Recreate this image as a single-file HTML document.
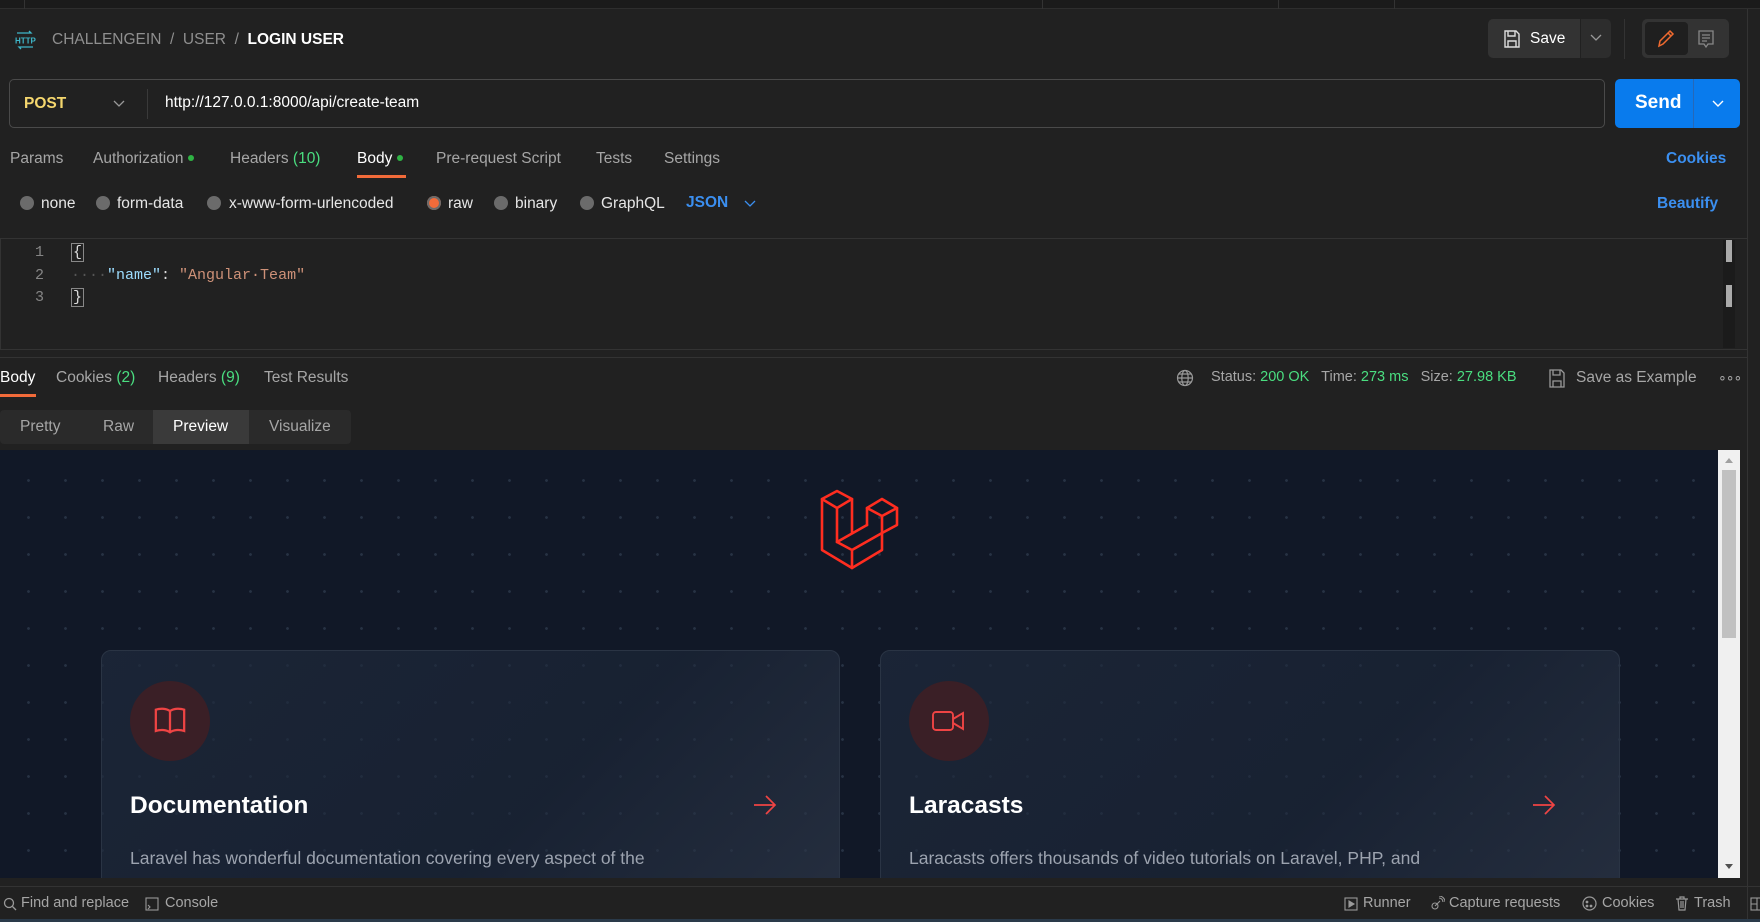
<!DOCTYPE html>
<html><head><meta charset="utf-8"><style>
*{box-sizing:border-box;margin:0;padding:0}
body{width:1760px;height:922px;background:#212121;font-family:"Liberation Sans",sans-serif;color:#a6a6a6;position:relative;overflow:hidden;font-size:15px}
.a{position:absolute;white-space:nowrap}
.w{color:#fff}
.g{color:#4ade80}
.b{color:#3b8ff0}
.dot{display:inline-block;width:6px;height:6px;border-radius:50%;background:#2fb344;margin-left:5px;vertical-align:middle;position:relative;top:-1px}
.rad{position:absolute;width:14px;height:14px;border-radius:50%;background:#6b6b6b}
.grid{background-color:#111827;background-image:radial-gradient(circle,#273244 1.2px,transparent 1.6px);background-size:37px 37px;background-position:10px 12px}
.card{position:absolute;top:650px;height:240px;border-radius:10px;border:1px solid #2a3444;background:linear-gradient(135deg,rgba(30,41,59,.75),rgba(30,41,59,.55) 60%,rgba(45,55,72,.7))}
.circ{position:absolute;left:28px;top:30px;width:80px;height:80px;border-radius:50%;background:#3a1f26}
.ct{position:absolute;left:28px;top:141px;font-size:24.5px;font-weight:bold;color:#fff}
.cd{position:absolute;left:28px;top:197px;font-size:17.5px;color:#9ca3af}
</style></head><body>
<div class="a" style="left:0;top:0;width:1760px;height:9px;background:#1b1b1b;border-bottom:1px solid #2e2e2e"></div>
<div class="a" style="left:24px;top:0;width:1px;height:9px;background:#333"></div>
<div class="a" style="left:1042px;top:0;width:1px;height:9px;background:#333"></div>
<div class="a" style="left:1278px;top:0;width:1px;height:9px;background:#333"></div>
<div class="a" style="left:1394px;top:0;width:1px;height:9px;background:#333"></div>
<div class="a" style="left:1747px;top:9px;width:1px;height:913px;background:#333"></div>
<svg class="a" style="left:13px;top:30px" width="24" height="20" viewBox="0 0 24 20"><g stroke="#3fb7c9" fill="none" stroke-width="1.3"><path d="M4 3h14l-2-2M20 17H6l2 2"/></g><text x="2" y="13.5" font-size="8" fill="#3fb7c9" font-family="Liberation Sans" font-weight="bold">HTTP</text></svg>
<div class="a" style="left:52px;top:31px;font-size:15.5px;color:#8f8f8f">CHALLENGEIN &nbsp;/&nbsp; USER &nbsp;/&nbsp; <span class="w" style="font-weight:bold">LOGIN USER</span></div>
<div class="a" style="left:1488px;top:19px;width:92px;height:39px;background:#333;border-radius:5px 0 0 5px"></div>
<svg class="a" style="left:1502px;top:29px" width="20" height="20" viewBox="0 0 20 20" fill="none" stroke="#ddd" stroke-width="1.4"><path d="M3 2h11l3 3v13H3z"/><path d="M6 2v5h7V2M6 18v-6h8v6"/></svg>
<div class="a w" style="left:1530px;top:30px;font-size:15.5px">Save</div>
<div class="a" style="left:1581px;top:19px;width:30px;height:39px;background:#2d2d2d;border-radius:0 5px 5px 0"></div>
<svg class="a" style="left:1590px;top:34px" width="12" height="8"><path d="M1 1l5 5 5-5" stroke="#999" fill="none" stroke-width="1.3"/></svg>
<div class="a" style="left:1624px;top:19px;width:1px;height:40px;background:#333"></div>
<div class="a" style="left:1642px;top:19px;width:87px;height:39px;background:#333;border-radius:5px"></div>
<div class="a" style="left:1645px;top:22px;width:43px;height:33px;background:#1f1f1f;border-radius:4px"></div>
<svg class="a" style="left:1656px;top:28px" width="20" height="20" viewBox="0 0 20 20" fill="none" stroke="#f06a2f" stroke-width="1.5"><path d="M3 18l1-5L14 3l3 3L7 16z"/><path d="M12 5l3 3"/></svg>
<svg class="a" style="left:1697px;top:29px" width="18" height="20" viewBox="0 0 18 20" fill="none" stroke="#888" stroke-width="1.3"><path d="M2 2h14v13H11l-2 3-2-3H2z"/><path d="M5 6h8M5 9h8M5 12h5"/></svg>
<div class="a" style="left:9px;top:79px;width:1596px;height:49px;border:1px solid #4a4a4a;border-radius:5px;background:#212121"></div>
<div class="a" style="left:24px;top:95px;font-size:15.5px;font-weight:bold;color:#f5d76e">POST</div>
<svg class="a" style="left:113px;top:100px" width="12" height="8"><path d="M1 1l5 5 5-5" stroke="#999" fill="none" stroke-width="1.3"/></svg>
<div class="a" style="left:147px;top:89px;width:1px;height:30px;background:#3a3a3a"></div>
<div class="a w" style="left:165px;top:94px;font-size:15.5px">http://127.0.0.1:8000/api/create-team</div>
<div class="a" style="left:1615px;top:79px;width:125px;height:49px;background:#097bed;border-radius:5px"></div>
<div class="a" style="left:1693px;top:79px;width:1px;height:49px;background:#2668b8"></div>
<div class="a w" style="left:1635px;top:92px;font-size:19px;font-weight:bold">Send</div>
<svg class="a" style="left:1712px;top:100px" width="12" height="8"><path d="M1 1l5 5 5-5" stroke="#fff" fill="none" stroke-width="1.4"/></svg>
<div class="a" style="left:10px;top:150px;font-size:15.5px">Params</div>
<div class="a" style="left:93px;top:150px;font-size:15.5px">Authorization<span class="dot"></span></div>
<div class="a" style="left:230px;top:150px;font-size:15.5px">Headers <span class="g">(10)</span></div>
<div class="a w" style="left:357px;top:150px;font-size:15.5px">Body<span class="dot"></span></div>
<div class="a" style="left:357px;top:175px;width:49px;height:3px;background:#f26b3a"></div>
<div class="a" style="left:436px;top:150px;font-size:15.5px">Pre-request Script</div>
<div class="a" style="left:596px;top:150px;font-size:15.5px">Tests</div>
<div class="a" style="left:664px;top:150px;font-size:15.5px">Settings</div>
<div class="a b" style="left:1666px;top:150px;font-size:15.5px;font-weight:bold">Cookies</div>
<div class="rad" style="left:20px;top:196px"></div><div class="a" style="left:41px;top:195px;font-size:15.5px;color:#e6e6e6">none</div>
<div class="rad" style="left:96px;top:196px"></div><div class="a" style="left:117px;top:195px;font-size:15.5px;color:#e6e6e6">form-data</div>
<div class="rad" style="left:207px;top:196px"></div><div class="a" style="left:229px;top:195px;font-size:15.5px;color:#e6e6e6">x-www-form-urlencoded</div>
<div class="rad" style="left:427px;top:196px;background:#f26b3a;box-shadow:0 0 0 2px #6b6b6b inset"></div><div class="a" style="left:448px;top:195px;font-size:15.5px;color:#e6e6e6">raw</div>
<div class="rad" style="left:494px;top:196px"></div><div class="a" style="left:515px;top:195px;font-size:15.5px;color:#e6e6e6">binary</div>
<div class="rad" style="left:580px;top:196px"></div><div class="a" style="left:601px;top:195px;font-size:15.5px;color:#e6e6e6">GraphQL</div>
<div class="a b" style="left:686px;top:194px;font-size:15.5px;font-weight:bold">JSON</div>
<svg class="a" style="left:744px;top:200px" width="12" height="8"><path d="M1 1l5 5 5-5" stroke="#3b8ff0" fill="none" stroke-width="1.3"/></svg>
<div class="a b" style="left:1657px;top:195px;font-size:15.5px;font-weight:bold">Beautify</div>
<div class="a" style="left:0;top:238px;width:1747px;height:112px;border-top:1px solid #333;border-bottom:1px solid #333;border-left:1px solid #333"></div>
<div class="a" style="left:1723px;top:240px;width:12px;height:108px;background:#1b1b1b"></div>
<div class="a" style="left:1726px;top:240px;width:6px;height:22px;background:#aaa"></div>
<div class="a" style="left:1726px;top:285px;width:6px;height:22px;background:#aaa"></div>
<div class="a" style="font-family:'Liberation Mono',monospace;font-size:15px;left:35px;top:242px;line-height:22.5px;color:#858585">1<br>2<br>3</div>
<div class="a" style="font-family:'Liberation Mono',monospace;font-size:15px;left:71px;top:242px;line-height:22.5px;color:#ddd"><span style="border:1px solid #888;padding:0 1px">{</span><br><span style="color:#555">····</span><span style="color:#9cdcfe">"name"</span>: <span style="color:#ce9178">"Angular·Team"</span><br><span style="border:1px solid #888;padding:0 1px">}</span></div>
<div class="a" style="left:0;top:357px;width:1747px;height:1px;background:#333"></div>
<div class="a w" style="left:0;top:369px;font-size:15.5px">Body</div>
<div class="a" style="left:0;top:394px;width:36px;height:3px;background:#f26b3a"></div>
<div class="a" style="left:56px;top:369px;font-size:15.5px">Cookies <span class="g">(2)</span></div>
<div class="a" style="left:158px;top:369px;font-size:15.5px">Headers <span class="g">(9)</span></div>
<div class="a" style="left:264px;top:369px;font-size:15.5px">Test Results</div>
<svg class="a" style="left:1176px;top:369px" width="18" height="18" viewBox="0 0 18 18" fill="none" stroke="#999" stroke-width="1.2"><circle cx="9" cy="9" r="7.5"/><ellipse cx="9" cy="9" rx="3.2" ry="7.5"/><path d="M1.5 9h15M3 5h12M3 13h12"/></svg>
<div class="a" style="left:1211px;top:369px;font-size:14.5px">Status: <span class="g">200 OK</span> &nbsp; Time: <span class="g">273 ms</span> &nbsp; Size: <span class="g">27.98 KB</span></div>
<svg class="a" style="left:1548px;top:369px" width="18" height="19" viewBox="0 0 18 19" fill="none" stroke="#999" stroke-width="1.3"><path d="M2 1h11l3 3v14H2z"/><path d="M5 1v5h7V1M5 18v-6h8v6"/></svg>
<div class="a" style="left:1576px;top:369px;font-size:15.5px">Save as Example</div>
<div class="a" style="left:1718px;top:369px;font-size:14px;letter-spacing:-1px">∘∘∘</div>
<div class="a" style="left:0;top:410px;width:351px;height:34px;background:#2a2a2a;border-radius:4px"></div>
<div class="a" style="left:153px;top:410px;width:96px;height:34px;background:#3a3a3a"></div>
<div class="a" style="left:20px;top:418px;font-size:15.5px">Pretty</div>
<div class="a" style="left:103px;top:418px;font-size:15.5px">Raw</div>
<div class="a w" style="left:173px;top:418px;font-size:15.5px">Preview</div>
<div class="a" style="left:269px;top:418px;font-size:15.5px">Visualize</div>
<div class="a grid" style="left:0;top:450px;width:1718px;height:428px;overflow:hidden">
<svg class="a" style="left:800px;top:30px" width="110" height="100" viewBox="0 0 110 100" fill="none" stroke="#ff2d20" stroke-width="2.6" stroke-linejoin="round" stroke-linecap="round"><path d="M22 19L37 11L52 19L37 28Z"/><path d="M22 19V70L52 88L82 70V53"/><path d="M37 28V62L67 45M52 19V53"/><path d="M67 28L82 19L97 28L82 36Z"/><path d="M67 28V45M97 28V45L82 53L52 70L37 62M82 36V53M52 70V88"/></svg>
<div class="card" style="left:101px;width:739px;top:200px">
<div class="circ"></div>
<svg class="a" style="left:51px;top:54px" width="34" height="32" viewBox="0 0 24 22" fill="none" stroke="#ef4444" stroke-width="1.6"><path d="M12 4C9 2 5 2 2 3v15c3-1 7-1 10 1 3-2 7-2 10-1V3c-3-1-7-1-10 1zM12 4v15"/></svg>
<div class="ct">Documentation</div>
<svg class="a" style="left:651px;top:143px" width="24" height="22" viewBox="0 0 24 22" fill="none" stroke="#ef4444" stroke-width="1.7"><path d="M1 11h21M13 2l9 9-9 9"/></svg>
<div class="cd">Laravel has wonderful documentation covering every aspect of the</div>
</div>
<div class="card" style="left:880px;width:740px;top:200px">
<div class="circ"></div>
<svg class="a" style="left:50px;top:58px" width="36" height="24" viewBox="0 0 36 24" fill="none" stroke="#ef4444" stroke-width="1.9"><rect x="2" y="3" width="20" height="18" rx="3"/><path d="M22 10l10-6v16l-10-6"/></svg>
<div class="ct">Laracasts</div>
<svg class="a" style="left:651px;top:143px" width="24" height="22" viewBox="0 0 24 22" fill="none" stroke="#ef4444" stroke-width="1.7"><path d="M1 11h21M13 2l9 9-9 9"/></svg>
<div class="cd">Laracasts offers thousands of video tutorials on Laravel, PHP, and</div>
</div>
</div>
<div class="a" style="left:1718px;top:450px;width:22px;height:428px;background:#f0f0f0"></div>
<div class="a" style="left:1722px;top:470px;width:14px;height:168px;background:#c1c1c1"></div>
<svg class="a" style="left:1723px;top:456px" width="12" height="8"><path d="M2 7l4-5 4 5z" fill="#a0a0a0"/></svg>
<svg class="a" style="left:1723px;top:863px" width="12" height="8"><path d="M2 1l4 5 4-5z" fill="#505050"/></svg>
<div class="a" style="left:0;top:886px;width:1760px;height:1px;background:#333"></div>
<div class="a" style="left:0;top:919px;width:1760px;height:3px;background:#2a3a4a"></div>
<svg class="a" style="left:3px;top:897px" width="14" height="14" fill="none" stroke="#999" stroke-width="1.3"><circle cx="6" cy="6" r="4.5"/><path d="M9.5 9.5l3.5 3.5"/></svg>
<div class="a" style="left:21px;top:895px;font-size:14.5px">Find and replace</div>
<svg class="a" style="left:145px;top:897px" width="14" height="14" fill="none" stroke="#999" stroke-width="1.1"><rect x="1" y="1" width="12" height="12"/><path d="M3 8l2 2-2 2"/></svg>
<div class="a" style="left:165px;top:895px;font-size:14.5px">Console</div>
<svg class="a" style="left:1344px;top:897px" width="14" height="14" fill="none" stroke="#999" stroke-width="1.1"><rect x="1" y="1" width="12" height="12"/><path d="M5 4l5 3-5 3z" fill="#999"/></svg>
<div class="a" style="left:1363px;top:895px;font-size:14.5px">Runner</div>
<svg class="a" style="left:1430px;top:896px" width="15" height="15" fill="none" stroke="#999" stroke-width="1.1"><circle cx="5" cy="10" r="3"/><path d="M5 10l5-5M9 2a4 4 0 0 1 4 4M9 0a6 6 0 0 1 6 6"/></svg>
<div class="a" style="left:1449px;top:895px;font-size:14.5px">Capture requests</div>
<svg class="a" style="left:1582px;top:896px" width="15" height="15" fill="none" stroke="#999" stroke-width="1.2"><circle cx="7.5" cy="7.5" r="6.5"/><circle cx="5" cy="6" r=".8" fill="#999"/><circle cx="9" cy="10" r=".8" fill="#999"/><circle cx="5" cy="10" r=".8" fill="#999"/></svg>
<div class="a" style="left:1602px;top:895px;font-size:14.5px">Cookies</div>
<svg class="a" style="left:1675px;top:896px" width="14" height="15" fill="none" stroke="#999" stroke-width="1.2"><path d="M1 3h12M5 3V1h4v2M3 3l1 11h6l1-11M6 5v7M8 5v7"/></svg>
<div class="a" style="left:1694px;top:895px;font-size:14.5px">Trash</div>
<svg class="a" style="left:1750px;top:897px" width="12" height="14" fill="none" stroke="#999" stroke-width="1.1"><rect x="1" y="1" width="12" height="12"/><path d="M7 1v12M1 7h6"/></svg>
</body></html>
